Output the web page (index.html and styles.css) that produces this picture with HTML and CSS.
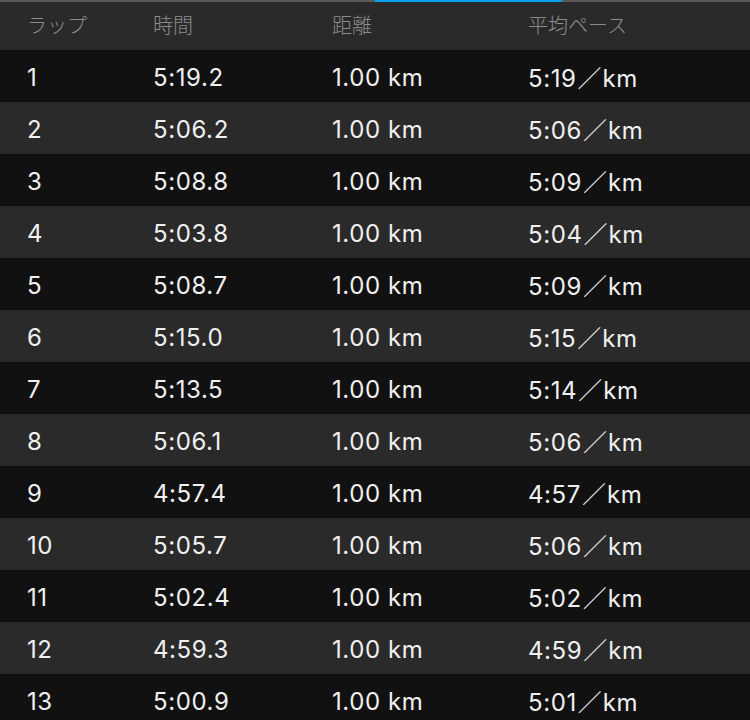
FILE: index.html
```html
<!DOCTYPE html>
<html lang="ja">
<head>
    <meta charset="UTF-8">
    <meta name="viewport" content="width=device-width, initial-scale=1.0">
    <title>ラップ</title>
    <link rel="stylesheet" href="styles.css">
</head>
<body>
    <div class="tabline"><div class="tab-active"></div></div>
    <div class="laps">
        <div class="row head">
            <span>ラップ</span><span>時間</span><span>距離</span><span>平均ペース</span>
        </div>
        <div class="row"><span>1</span><span>5:19.2</span><span>1.00 km</span><span>5:19<i>／</i>km</span></div>
        <div class="row"><span>2</span><span>5:06.2</span><span>1.00 km</span><span>5:06<i>／</i>km</span></div>
        <div class="row"><span>3</span><span>5:08.8</span><span>1.00 km</span><span>5:09<i>／</i>km</span></div>
        <div class="row"><span>4</span><span>5:03.8</span><span>1.00 km</span><span>5:04<i>／</i>km</span></div>
        <div class="row"><span>5</span><span>5:08.7</span><span>1.00 km</span><span>5:09<i>／</i>km</span></div>
        <div class="row"><span>6</span><span>5:15.0</span><span>1.00 km</span><span>5:15<i>／</i>km</span></div>
        <div class="row"><span>7</span><span>5:13.5</span><span>1.00 km</span><span>5:14<i>／</i>km</span></div>
        <div class="row"><span>8</span><span>5:06.1</span><span>1.00 km</span><span>5:06<i>／</i>km</span></div>
        <div class="row"><span>9</span><span>4:57.4</span><span>1.00 km</span><span>4:57<i>／</i>km</span></div>
        <div class="row"><span>10</span><span>5:05.7</span><span>1.00 km</span><span>5:06<i>／</i>km</span></div>
        <div class="row"><span>11</span><span>5:02.4</span><span>1.00 km</span><span>5:02<i>／</i>km</span></div>
        <div class="row"><span>12</span><span>4:59.3</span><span>1.00 km</span><span>4:59<i>／</i>km</span></div>
        <div class="row"><span>13</span><span>5:00.9</span><span>1.00 km</span><span>5:01<i>／</i>km</span></div>
    </div>
</body>
</html>
```

FILE: styles.css
```css
body {
    margin: 0;
    background-color: #111111;
    font-family: Inter, "Noto Sans CJK JP", sans-serif;
    color: #f0f0f0;
    height: 720px;
    overflow: hidden;
}
.tabline {
    height: 2px;
    background-color: #5a5a5a;
    display: flex;
    padding-left: 375px;
}
.tab-active {
    width: 187px;
    background-color: #0a9ff0;
}
.row {
    display: grid;
    grid-template-columns: 126px 179px 196px 1fr;
    align-items: center;
    height: 52px;
    box-sizing: border-box;
    padding-left: 27px;
    padding-top: 3px;
    font-size: 24px;
    letter-spacing: 0.6px;
    line-height: 1;
}
.row span {
    line-height: 1;
}
.row i {
    font-style: normal;
    font-family: "Noto Sans CJK JP", sans-serif;
    font-weight: 300;
    letter-spacing: 0;
    display: inline-block;
    margin: 0 1px;
}
.row:nth-child(odd) {
    background-color: #2a2a2a;
}
.row:nth-child(even) {
    background-color: #111111;
}
.head {
    height: 48px;
    padding-top: 0;
    padding-bottom: 2px;
    font-size: 20px;
    letter-spacing: 0;
    color: #8c8c8c;
    background-color: #282828;
}
.head span {
    font-family: "Noto Sans CJK JP", sans-serif;
    font-weight: 300;
}
```
